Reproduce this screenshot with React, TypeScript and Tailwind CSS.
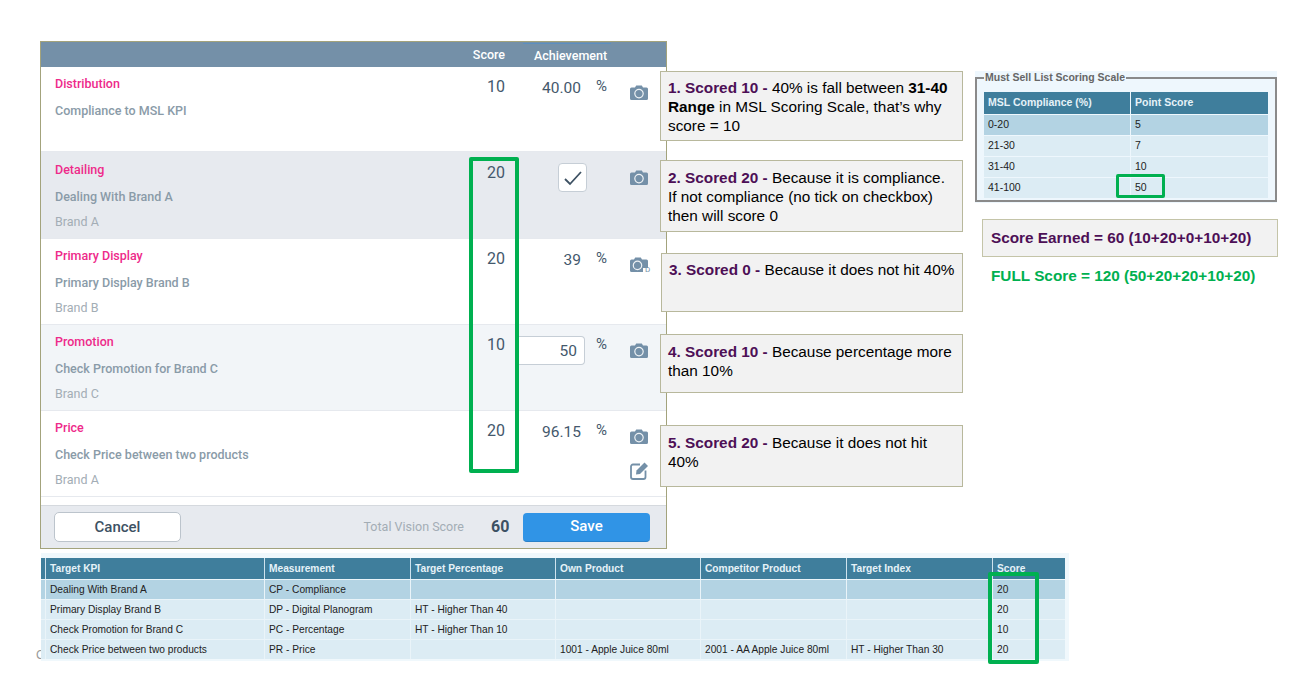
const ROBOTO = 'font-["Roboto",sans-serif]';
const ARIAL = 'font-["Liberation_Sans",Arial,sans-serif]';

interface KpiRow {
  title: string;
  name: string;
  brand?: string;
  score: number;
  height: string;
  bg: string;
  titlePad: string;
  scorePad: string;
  value?: string;
  mode: 'text' | 'check' | 'input';
  digital?: boolean;
  edit?: boolean;
}

const kpiRows: KpiRow[] = [
  { title: 'Distribution', name: 'Compliance to MSL KPI', score: 10, height: 'h-[85px]', bg: 'bg-white', titlePad: 'pt-[9px]', scorePad: 'pt-[10px]', value: '40.00', mode: 'text' },
  { title: 'Detailing', name: 'Dealing With Brand A', brand: 'Brand A', score: 20, height: 'h-[87px]', bg: 'bg-[#e7eaef]', titlePad: 'pt-[10px]', scorePad: 'pt-[11px]', mode: 'check' },
  { title: 'Primary Display', name: 'Primary Display Brand B', brand: 'Brand B', score: 20, height: 'h-[86px]', bg: 'bg-white', titlePad: 'pt-[9px]', scorePad: 'pt-[10px]', value: '39', mode: 'text', digital: true },
  { title: 'Promotion', name: 'Check Promotion for Brand C', brand: 'Brand C', score: 10, height: 'h-[86px]', bg: 'bg-[#f2f5f8]', titlePad: 'pt-[9px]', scorePad: 'pt-[10px]', value: '50', mode: 'input' },
  { title: 'Price', name: 'Check Price between two products', brand: 'Brand A', score: 20, height: 'h-[86px]', bg: 'bg-white', titlePad: 'pt-[9px]', scorePad: 'pt-[10px]', value: '96.15', mode: 'text', edit: true },
];

const notes = [
  { head: '1. Scored 10 - ', body: <>40% is fall between <b>31-40 Range</b> in MSL Scoring Scale, that’s why score = 10</>, box: 'h-[70px] mt-[30px] pt-[6px]' },
  { head: '2. Scored 20 - ', body: <>Because it is compliance.<br />If not compliance (no tick on checkbox) then will score 0</>, box: 'h-[72px] mt-[19px] pt-[7px]' },
  { head: '3. Scored 0 - ', body: <>Because it does not hit 40%</>, box: 'h-[59px] mt-[21px] pt-[6px] ml-px' },
  { head: '4. Scored 10 - ', body: <>Because percentage more than 10%</>, box: 'h-[59px] mt-[22px] pt-[7px]' },
  { head: '5. Scored 20 - ', body: <>Because it does not hit 40%</>, box: 'h-[62px] mt-[32px] pt-[7px]' },
];

const targetRows = [
  ['Dealing With Brand A', 'CP - Compliance', '', '', '', '', '20'],
  ['Primary Display Brand B', 'DP - Digital Planogram', 'HT - Higher Than 40', '', '', '', '20'],
  ['Check Promotion for Brand C', 'PC - Percentage', 'HT - Higher Than 10', '', '', '', '10'],
  ['Check Price between two products', 'PR - Price', '', '1001 - Apple Juice 80ml', '2001 - AA Apple Juice 80ml', 'HT - Higher Than 30', '20'],
];

const targetHeads = ['Target KPI', 'Measurement', 'Target Percentage', 'Own Product', 'Competitor Product', 'Target Index', 'Score'];
const targetCols = 'grid w-[1024px] grid-cols-[5px_219px_146px_145px_145px_146px_146px_72px]';

const scaleRows = [
  ['0-20', '5'],
  ['21-30', '7'],
  ['31-40', '10'],
  ['41-100', '50'],
];

function CameraIcon() {
  return (
    <svg width="18" height="15" viewBox="0 0 18 15" className="block">
      <path
        d="M1.5 2.5H5L6.2 0.5H11.8L13 2.5H16.5A1.5 1.5 0 0 1 18 4V13.5A1.5 1.5 0 0 1 16.5 15H1.5A1.5 1.5 0 0 1 0 13.5V4A1.5 1.5 0 0 1 1.5 2.5Z"
        fill="#7490a8"
      />
      <circle cx="9" cy="8.6" r="4.2" fill="none" stroke="#eef2f5" strokeWidth="1.2" />
    </svg>
  );
}

function DigitalCameraIcon() {
  return (
    <div className="relative">
      <svg width="18" height="15" viewBox="0 0 18 15" className="block">
        <path
          d="M1.5 2.5H4L5.2 0.5H10.8L12 2.5H16.5A1.5 1.5 0 0 1 18 4V11H13V15H1.5A1.5 1.5 0 0 1 0 13.5V4A1.5 1.5 0 0 1 1.5 2.5Z"
          fill="#7490a8"
        />
        <circle cx="7.5" cy="8.4" r="4.2" fill="none" stroke="#eef2f5" strokeWidth="1.2" />
      </svg>
      <span className="absolute left-[15px] top-[8px] text-[8px] leading-[10px] text-[#7490a8]">D</span>
    </div>
  );
}

function EditIcon() {
  return (
    <svg width="19" height="19" viewBox="0 0 19 19" className="mt-[17px] block" fill="none">
      <path d="M10 3.5H3A2 2 0 0 0 1 5.5V16A2 2 0 0 0 3 18H13.5A2 2 0 0 0 15.5 16V9.5" stroke="#7490a8" strokeWidth="1.8" />
      <path d="M6.5 9.5L14.5 1.5L18 5L10 13L6 13.6Z" fill="#7490a8" />
    </svg>
  );
}

function KpiPanelRow({ row }: { row: KpiRow }) {
  return (
    <div className={`flex ${row.height} ${row.bg} border-b border-[#e6e9ee]`}>
      <div className={`w-[427px] pl-[14px] ${row.titlePad}`}>
        <div className="text-[12.5px] leading-[16px] font-medium text-[#ee2a8a]">{row.title}</div>
        <div className="mt-[11px] text-[12.5px] leading-[16px] font-medium text-[#8a9ba8]">{row.name}</div>
        {row.brand && <div className="mt-[9px] text-[12.5px] leading-[16px] text-[#a3adb5]">{row.brand}</div>}
      </div>
      <div className={`w-[37px] ${row.scorePad} text-right text-[16px] leading-[20px] text-[#44586c]`}>{row.score}</div>
      <div className="w-[76px] pt-[11px] text-right text-[15.5px] leading-[20px] text-[#44586c]">
        {row.mode === 'text' && row.value}
        {row.mode === 'input' && (
          <div className="ml-[10px] flex h-[29px] w-[70px] items-center justify-end rounded-r-[4px] border border-l-0 border-[#c6ced6] bg-white pr-[7px]">
            {row.value}
          </div>
        )}
        {row.mode === 'check' && (
          <div className="ml-[53px] flex h-[29px] w-[29px] items-center justify-center rounded-[4px] border border-[#c6ced6] bg-white">
            <svg width="20" height="16" viewBox="0 0 20 16" fill="none" stroke="#3d5163" strokeWidth="1.8">
              <path d="M2 9l5 5L18 2" />
            </svg>
          </div>
        )}
      </div>
      <div className="w-[29px] pt-[9px] pl-[15px] text-[15px] leading-[20px] text-[#44586c]">{row.mode !== 'check' && '%'}</div>
      <div className="flex w-[40px] flex-col pl-[20px] pt-[18px]">
        {row.digital ? <DigitalCameraIcon /> : <CameraIcon />}
        {row.edit && <EditIcon />}
      </div>
    </div>
  );
}

function KpiPanel() {
  return (
    <div className={`${ROBOTO} flex h-[508px] w-[627px] shrink-0 flex-col border border-[#a3a37c] bg-white`}>
      <div className="flex h-[25px] shrink-0 bg-[#7490a8] text-[12.5px] font-medium text-white">
        <div className="w-[430px]" />
        <div className="w-[34px] pt-[5px] text-right leading-[16px]">Score</div>
        <div className="mt-px ml-[18px] w-[88px] border-t border-[#5c8fbf] pt-[4px] pl-[11px] leading-[16px] whitespace-nowrap">Achievement</div>
      </div>
      {kpiRows.map((row) => (
        <KpiPanelRow key={row.title} row={row} />
      ))}
      <div className="h-[8px] shrink-0 bg-white" />
      <div className="flex flex-1 items-center border-t border-[#d5d9de] bg-[#e7eaef] pl-[13px] pr-[16px]">
        <div className="flex h-[30px] w-[127px] items-center justify-center rounded-[5px] border-[1.5px] border-[#bcc4cc] bg-white text-[15px] font-medium text-[#3d5163]">
          Cancel
        </div>
        <div className="ml-auto text-[12.5px] text-[#a3adb5]">Total Vision Score</div>
        <div className="ml-[27px] w-[19px] text-[16px] font-bold text-[#3d5163]">60</div>
        <div className="ml-[13px] flex h-[29px] w-[127px] items-center justify-center rounded-[4px] border-b border-[#2a80c8] bg-[#3094e6] text-[15px] font-medium text-white">
          Save
        </div>
      </div>
    </div>
  );
}

function Notes() {
  return (
    <div className={`${ARIAL} relative z-10 -ml-[7px] w-[303px] shrink-0`}>
      {notes.map((note) => (
        <div
          key={note.head}
          className={`${note.box} border border-[#b8b89c] bg-[#f2f2f2] pl-[7px] pr-[6px] text-[15.33px] leading-[19px] text-black`}
        >
          <b className="text-[#4d0f56]">{note.head}</b>
          {note.body}
        </div>
      ))}
    </div>
  );
}

function ScoreSide() {
  return (
    <div className={`${ARIAL} ml-[12px] mt-[30px] w-[304px]`}>
      <div className="relative h-[132px] w-[302px] bg-[#eef7fd] pt-[6px]">
        <div className="h-[125px] border-2 border-[#8a8a8a] px-[7px] pt-[13px]">
          <span className="absolute left-[9px] top-0 bg-[#eef7fd] px-px text-[10.5px] font-bold leading-[13px] text-[#666]">
            Must Sell List Scoring Scale
          </span>
          <div className="grid grid-cols-[146px_137px] gap-px text-[10.5px]">
            <div className="flex h-[22px] items-center bg-[#3f7e9c] pl-[4px] font-bold text-[#e6f2f8]">MSL Compliance (%)</div>
            <div className="flex h-[22px] items-center bg-[#3f7e9c] pl-[4px] font-bold text-[#e6f2f8]">Point Score</div>
            {scaleRows.map((r, i) => (
              <div key={r[0]} className="contents">
                <div className={`flex h-[20px] items-center pl-[4px] text-[#222] ${i === 0 ? 'bg-[#b3d3e3]' : 'bg-[#dcecf4]'}`}>{r[0]}</div>
                <div className={`flex h-[20px] items-center pl-[4px] text-[#222] ${i === 0 ? 'bg-[#b3d3e3]' : 'bg-[#dcecf4]'}`}>{r[1]}</div>
              </div>
            ))}
          </div>
        </div>
        <div className="absolute left-[141px] top-[103px] h-[24px] w-[49px] rounded-[2px] border-[3px] border-[#00b050]" />
      </div>
      <div className="ml-[7px] mt-[16px] flex h-[38px] w-[296px] items-center border border-[#c4c4a8] bg-[#f2f2f2] pl-[8px] text-[15.33px] font-bold text-[#4d0f56]">
        Score Earned = 60 (10+20+0+10+20)
      </div>
      <div className="ml-[16px] mt-[10px] text-[15.33px] font-bold leading-[18px] whitespace-nowrap text-[#00b050]">
        FULL Score = 120 (50+20+20+10+20)
      </div>
    </div>
  );
}

function TargetTable() {
  return (
    <div className={`${ARIAL} relative ml-[1px] mt-[4px] h-[108px] w-[1028px] bg-[#f0f8fc] pt-[5px] text-[10.2px]`}>
      <div className={`${targetCols} h-[21px] bg-[#3f7e9c] font-bold text-[#e6f2f8]`}>
        <div className="border-r border-[#cfe3ee]" />
        {targetHeads.map((h) => (
          <div key={h} className="flex items-center border-r border-[#cfe3ee] pl-[4px] last:border-r-0">
            {h}
          </div>
        ))}
      </div>
      {targetRows.map((row, i) => (
        <div key={row[0]} className={`${targetCols} h-[20px] border-t border-[#eaf4f9] text-[#222] ${i === 0 ? 'bg-[#b3d3e3]' : 'bg-[#dcecf4]'}`}>
          <div className="border-r border-[#eaf4f9]" />
          {row.map((cell, j) => (
            <div key={j} className="flex items-center border-r border-[#eaf4f9] pl-[4px] last:border-r-0">
              {cell}
            </div>
          ))}
        </div>
      ))}
      <div className="absolute left-[947px] top-[19px] h-[92px] w-[51px] rounded-[2px] border-[4px] border-[#00b050]" />
    </div>
  );
}

export default function App() {
  return (
    <div className="relative h-[675px] w-[1316px] overflow-hidden bg-white pl-[40px] pt-[41px]">
      {/* bit of page text that pokes out from behind the pasted table */}
      <span className={`${ARIAL} absolute left-[36px] top-[648px] text-[12px] leading-[14px] text-[#999]`}>C</span>
      <div className="flex">
        <KpiPanel />
        <Notes />
        <ScoreSide />
      </div>
      <TargetTable />
      {/* green highlight over the score column */}
      <div className="absolute left-[469px] top-[157px] h-[316px] w-[50px] rounded-[2px] border-[4px] border-[#00b050]" />
    </div>
  );
}
